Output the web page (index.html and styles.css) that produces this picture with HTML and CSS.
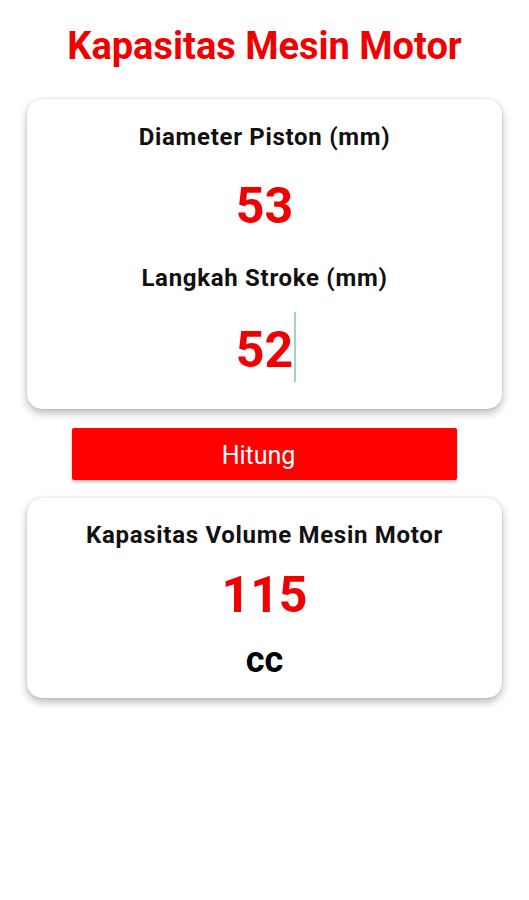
FILE: index.html
```html
<!DOCTYPE html>
<html lang="id">
<head>
    <meta charset="UTF-8">
    <title>Kapasitas Mesin Motor</title>
<link rel="stylesheet" href="styles.css">
</head>
<body>
    <div id="layar">
        <h1>Kapasitas Mesin Motor</h1>

        <div class="kartu kartu-input">
            <div class="label">Diameter Piston (mm)</div>
            <div class="nilai nilai-diameter">53</div>
            <div class="label label-stroke">Langkah Stroke (mm)</div>
            <div class="nilai nilai-stroke">52<span class="kursor"></span></div>
        </div>

        <button class="tombol">Hitung</button>

        <div class="kartu kartu-hasil">
            <div class="label">Kapasitas Volume Mesin Motor</div>
            <div class="hasil">115</div>
            <div class="satuan">cc</div>
        </div>
    </div>
</body>
</html>
```

FILE: styles.css
```css
body {
    margin: 0;
    background: #ffffff;
    font-family: Roboto, "Liberation Sans", sans-serif;
    text-align: center;
}

#layar {
    overflow: hidden;
    padding-bottom: 10px;
}

h1 {
    margin: 24px 0 31px;
    font-size: 38px;
    line-height: 44px;
    font-weight: bold;
    color: #f00000;
}

.kartu {
    margin: 0 27px;
    background: #fff;
    border-radius: 15px;
    box-shadow: 0 4px 8px rgba(0, 0, 0, 0.28), 0 0 2px rgba(0, 0, 0, 0.15);
}

.kartu-input {
    height: 310px;
    box-sizing: border-box;
    padding-top: 24px;
}

.label {
    font-size: 24px;
    line-height: 28px;
    font-weight: bold;
    color: #111;
    letter-spacing: 0.7px;
}

.nilai {
    font-size: 50px;
    line-height: 58px;
    font-weight: bold;
    color: #f00000;
}

.nilai-diameter {
    margin-top: 26px;
}

.label-stroke {
    margin-top: 29px;
}

.nilai-stroke {
    margin-top: 29px;
    position: relative;
}

.kursor {
    position: absolute;
    top: -9px;
    margin-left: 1px;
    height: 70px;
    border-left: 2px solid #9fd3cf;
}

.tombol {
    display: block;
    width: 385px;
    height: 52px;
    margin: 19px auto 18px;
    padding: 2px 12px 0 0;
    background-color: #ff0000;
    color: white;
    border: none;
    border-radius: 2px;
    font-family: Roboto, "Liberation Sans", sans-serif;
    font-size: 25px;
    box-shadow: 0 2px 3px rgba(0, 0, 0, 0.25);
}

.kartu-hasil {
    height: 200px;
    box-sizing: border-box;
    padding-top: 23px;
}

.hasil {
    margin-top: 17px;
    font-size: 50px;
    line-height: 58px;
    font-weight: bold;
    color: #f00000;
}

.satuan {
    margin-top: 15px;
    font-size: 36px;
    line-height: 42px;
    font-weight: bold;
    color: #000;
}
```
